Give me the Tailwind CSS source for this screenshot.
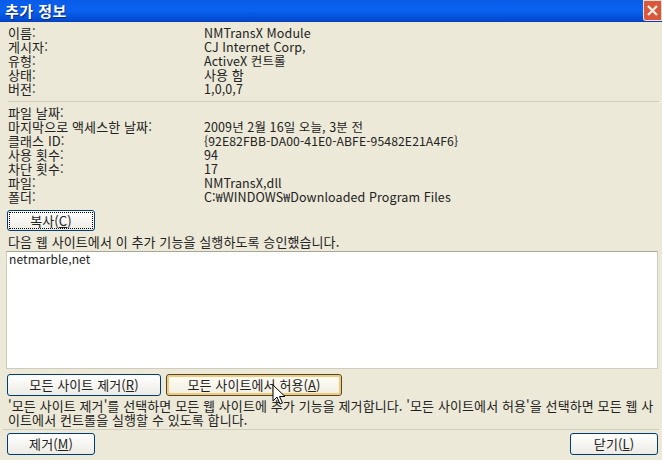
<!DOCTYPE html>
<html lang="ko">
<head>
  <meta charset="UTF-8">
  <title>추가 정보</title>
  <script src="https://cdn.jsdelivr.net/npm/@tailwindcss/browser@4"></script>
</head>
<body class="w-[662px] h-[460px] overflow-hidden bg-[#ece9d8] text-[13px] leading-[14px] tracking-[0.1px] text-[#222] font-['Noto_Sans_CJK_KR','Liberation_Sans',sans-serif]">
  <!-- title bar -->
  <div class="h-[22px] flex items-center justify-between pl-[5px] bg-gradient-to-b from-[#0a5ce8] via-[#0a62f0] to-[#0348cf] border-b border-[#0a3fb5]">
    <span class="text-white font-bold text-[15px] tracking-[0.5px] [text-shadow:1px_1px_0_#0a2a80]">추가 정보</span>
    <div class="w-[19px] h-[21px] bg-[#d9573a] border border-white/80 rounded-bl-[3px] flex items-center justify-center">
      <svg width="13" height="13" viewBox="0 0 13 13"><path d="M2 2 L11 11 M11 2 L2 11" stroke="#fdeee0" stroke-width="2.4"/></svg>
    </div>
  </div>

  <div class="pl-[8px] pr-[3px]">
    <!-- control info -->
    <div class="grid grid-cols-[196px_1fr] pt-[4px] pb-[5px] border-b border-[#d0cdbc]">
      <span>이름:</span><span class="text-[12.5px]">NMTransX Module</span>
      <span>게시자:</span><span class="text-[12.5px]">CJ Internet Corp,</span>
      <span>유형:</span><span class="text-[12.5px]">ActiveX 컨트롤</span>
      <span>상태:</span><span>사용 함</span>
      <span>버전:</span><span class="text-[12.5px]">1,0,0,7</span>
    </div>

    <!-- file info -->
    <div class="grid grid-cols-[196px_1fr] pt-[4px]">
      <span>파일 날짜:</span><span></span>
      <span>마지막으로 액세스한 날짜:</span><span class="text-[12.5px]">2009년 2월 16일 오늘, 3분 전</span>
      <span>클래스 ID:</span><span class="text-[12.2px]">{92E82FBB-DA00-41E0-ABFE-95482E21A4F6}</span>
      <span>사용 횟수:</span><span class="text-[12.5px]">94</span>
      <span>차단 횟수:</span><span class="text-[12.5px]">17</span>
      <span>파일:</span><span class="text-[12.5px]">NMTransX,dll</span>
      <span>폴더:</span><span class="text-[12.5px]">C:₩WINDOWS₩Downloaded Program Files</span>
    </div>

    <button class="mt-[6px] ml-[-1px] block w-[88px] h-[21px] rounded-[3px] border border-[#003c74] bg-gradient-to-b from-white to-[#ecebe4]">
      <span class="block m-[1px] leading-[15px] border border-dotted border-black">복사(<u>C</u>)</span>
    </button>

    <p class="mt-[4px]">다음 웹 사이트에서 이 추가 기능을 실행하도록 승인했습니다.</p>

    <div class="mt-[2px] ml-[-2px] mr-[1px] h-[118px] bg-white border border-[#cfccbc] border-t-[#a9a699] px-[2px] text-[12px]">netmarble,net</div>

    <div class="flex gap-[5px] mt-[5px] ml-[-1px]">
      <button class="w-[154px] h-[22px] rounded-[3px] border border-[#003c74] bg-gradient-to-b from-white to-[#ecebe4]">모든 사이트 제거(<u>R</u>)</button>
      <button class="w-[176px] h-[22px] rounded-[3px] border border-[#4a4a30] bg-gradient-to-b from-[#fffdf5] to-[#f1eee2] shadow-[inset_0_0_0_2px_#f5c977]">모든 사이트에서 허용(<u>A</u>)</button>
    </div>

    <p class="mt-[2px] pt-[1px] pr-[3px] break-all">'모든 사이트 제거'를 선택하면 모든 웹 사이트에 추가 기능을 제거합니다. '모든 사이트에서 허용'을 선택하면 모든 웹 사이트에서 컨트롤을 실행할 수 있도록 합니다.</p>
  </div>

  <div class="mt-[2px] mx-[3px] border-t border-[#d0cdbc]"></div>
  <div class="flex justify-between pt-[3px] pl-[7px] pr-[4px]">
    <button class="w-[88px] h-[22px] rounded-[3px] border border-[#003c74] bg-gradient-to-b from-white to-[#ecebe4]">제거(<u>M</u>)</button>
    <button class="w-[88px] h-[22px] rounded-[3px] border border-[#003c74] bg-gradient-to-b from-white to-[#ecebe4]">닫기(<u>L</u>)</button>
  </div>

  <!-- mouse pointer -->
  <svg class="absolute left-[272px] top-[384px]" width="14" height="22" viewBox="0 0 14 22"><path d="M1 1 V17 L5 13 L8 20 L10.5 19 L7.5 12.5 H13 Z" fill="#fff" stroke="#000" stroke-width="1"/></svg>
</body>
</html>
